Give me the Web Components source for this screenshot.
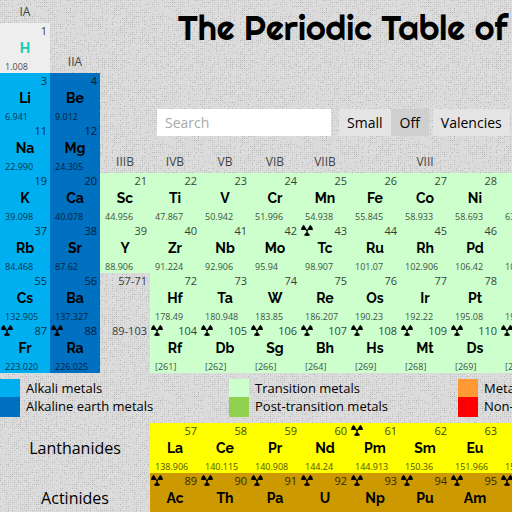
<!DOCTYPE html>
<html lang="en">
<head>
<meta charset="utf-8">
<title>The Periodic Table of Elements</title>
<style>
  html { overflow: hidden; }
  body { margin: 0; overflow: hidden; background-color: #dcdcdc; color: #000; font: 13px/18px "Open Sans", "Noto Sans", sans-serif; }
</style>
</head>
<body>
<periodic-app></periodic-app>

<template id="cell-template">
  <style>
    :host { display: grid; grid-template-rows: 16px 18px 16px; height: 50px; box-sizing: border-box; padding: 0 3px 0 1px; overflow: hidden; background: var(--cell, transparent); }
    :host([state="gas"]) { --symbol: #11ccaa; }
    .top { display: flex; align-items: center; justify-content: space-between; }
    .number { margin-left: auto; font-size: 11px; line-height: 16px; opacity: .75; }
    .symbol { font: 700 14px/18px "Raleway", "Lato", "Open Sans", sans-serif; padding-left: 2px; text-align: center; color: var(--symbol, #000); }
    .weight { font-size: 9px; line-height: 20px; padding-left: 4px; opacity: .7; white-space: nowrap; }
    svg { display: none; width: 12px; height: 12px; margin-top: -2px; }
    :host([radioactive]) svg { display: block; }
  </style>
  <div class="top">
    <svg viewBox="0 0 12 12" role="img" aria-label="Radioactive"><path d="M2.8.8 5.4 5A2 2 0 0 0 4.6 6H0Q.2 2.6 2.8.8ZM9.2.8Q11.8 2.6 12 6H7.4A2 2 0 0 0 6.6 5ZM6 7.4 9.2 11.2Q6 12.8 2.8 11.2ZM6 5.2a1.2 1.2 0 1 1 0 2.4 1.2 1.2 0 0 1 0-2.4Z"/></svg>
    <span class="number"><slot name="number"></slot></span>
  </div>
  <div class="symbol"><slot></slot></div>
  <div class="weight"><slot name="weight"></slot></div>
</template>

<template id="header-template">
  <style>
    :host { display: flex; flex-direction: column; height: 173px; box-sizing: border-box; }
    h1 { margin: 0; padding-left: 78px; height: 109px; box-sizing: border-box; font: 400 34px/56px "Righteous", "Lato", "Open Sans", sans-serif; white-space: nowrap; }
    form { display: flex; align-items: center; margin: 0; padding-left: 57px; gap: 8px; }
    input, button { box-sizing: border-box; height: 27px; border: 0; border-radius: 0; font: 14px/20px "Open Sans", "Noto Sans", sans-serif; color: #000; }
    input { width: 174px; padding: 0 8px; background: #fff; }
    input::placeholder { color: #a9a9a9; opacity: 1; }
    button { background: #e4e4e4; padding: 0 8px; white-space: nowrap; }
    button[aria-pressed="true"] { background: #cfcfcf; padding: 0 9px; }
    .group { display: flex; margin-right: -4px; }
  </style>
  <h1>The Periodic Table of</h1>
  <form>
    <input type="search" placeholder="Search" aria-label="Search">
    <div class="group"><button type="button">Small</button><button type="button" aria-pressed="true">Off</button></div>
    <button type="button">Valencies</button>
  </form>
  <slot></slot>
</template>

<template id="legend-template">
  <style>
    :host { display: block; padding: 6px 0; }
    ul { display: grid; grid-template-columns: repeat(3, 229px); grid-auto-rows: 18px; margin: 0; padding: 0 0 2px; list-style: none; }
    li { display: flex; gap: 6px; font-size: 13px; line-height: 19px; white-space: nowrap; }
    i { width: 20px; height: 20px; background: var(--swatch); }
  </style>
  <ul></ul>
</template>

<template id="app-template">
  <style>
    :host { display: block; overflow: hidden; }
    table { border-collapse: collapse; table-layout: fixed; width: 550px; }
    td, th { padding: 0; font-weight: 400; vertical-align: bottom; }
    .group { font-size: 12px; line-height: 23px; height: 23px; color: #444; text-align: center; }
    .groups { display: grid; grid-template-columns: repeat(8, 50px); margin-top: auto; }
    .series { font-size: 16px; line-height: 50px; text-align: center; vertical-align: middle; }
  </style>
  <table class="main"></table>
  <table-legend></table-legend>
  <table class="inner"></table>
</template>

<script>
  const stamp = (host, id) => {
    const root = host.attachShadow({ mode: "open" });
    root.append(document.getElementById(id).content.cloneNode(true));
    return root;
  };

  const colors = { h: "#eeeeee", a: "#00aff0", e: "#0070c0", t: "#ccffcc", l: "#ffff00", c: "#cc9900", r: "transparent" };

  const cell = ([kind, number, symbol = "", weight = "", radioactive]) =>
    `<td><element-cell style="--cell:${colors[kind]}"${radioactive ? " radioactive" : ""}${kind === "h" ? ' state="gas"' : ""}>` +
    `<span slot="number">${number}</span>${symbol}<span slot="weight">${weight}</span></element-cell></td>`;

  const series = (kind, start, list, radioactive) =>
    list.split(" ").map((entry, i) => {
      const [symbol, weight] = entry.split(":");
      return [kind, start + i, symbol, weight, radioactive || symbol === "Tc" || symbol === "Pm"];
    });

  const mainRows = [
    [["a", 19, "K", "39.098"], ["e", 20, "Ca", "40.078"],
      ...series("t", 21, "Sc:44.956 Ti:47.867 V:50.942 Cr:51.996 Mn:54.938 Fe:55.845 Co:58.933 Ni:58.693 Cu:63.546")],
    [["a", 37, "Rb", "84.468"], ["e", 38, "Sr", "87.62"],
      ...series("t", 39, "Y:88.906 Zr:91.224 Nb:92.906 Mo:95.94 Tc:98.907 Ru:101.07 Rh:102.906 Pd:106.42 Ag:107.868")],
    [["a", 55, "Cs", "132.905"], ["e", 56, "Ba", "137.327"], ["r", "57-71"],
      ...series("t", 72, "Hf:178.49 Ta:180.948 W:183.85 Re:186.207 Os:190.23 Ir:192.22 Pt:195.08 Au:196.967")],
    [["a", 87, "Fr", "223.020", true], ["e", 88, "Ra", "226.025", true], ["r", "89-103"],
      ...series("t", 104, "Rf:[261] Db:[262] Sg:[266] Bh:[264] Hs:[269] Mt:[268] Ds:[269] Rg:[272]", true)]
  ];

  class ElementCell extends HTMLElement {
    constructor() { super(); stamp(this, "cell-template"); }
  }

  class TableHeader extends HTMLElement {
    constructor() { super(); stamp(this, "header-template"); }
  }

  class TableLegend extends HTMLElement {
    constructor() {
      super();
      const items = [
        ["#00aff0", "Alkali metals"], ["#ccffcc", "Transition metals"], ["#ff9933", "Metalloids"],
        ["#0070c0", "Alkaline earth metals"], ["#92d050", "Post-transition metals"], ["#ff0000", "Non-metals"]
      ];
      stamp(this, "legend-template").querySelector("ul").innerHTML =
        items.map(([color, label]) => `<li><i style="--swatch:${color}"></i><span>${label}</span></li>`).join("");
    }
  }

  class PeriodicApp extends HTMLElement {
    constructor() {
      super();
      const root = stamp(this, "app-template");
      const groups = ["IIIB", "IVB", "VB", "VIB", "VIIB", "", "VIII"];
      const label = name => `<span class="group">${name}</span>`;
      root.querySelector(".main").innerHTML =
        `<colgroup>${"<col>".repeat(11)}</colgroup>` +
        `<tr><th class="group" scope="col">IA</th><td></td>` +
        `<td colspan="9" rowspan="4"><table-header><div class="groups">${groups.map(label).join("")}</div></table-header></td></tr>` +
        `<tr>${cell(["h", 1, "H", "1.008"])}<th class="group" scope="col">IIA</th></tr>` +
        `<tr>${cell(["a", 3, "Li", "6.941"])}${cell(["e", 4, "Be", "9.012"])}</tr>` +
        `<tr>${cell(["a", 11, "Na", "22.990"])}${cell(["e", 12, "Mg", "24.305"])}</tr>` +
        mainRows.map(row => `<tr>${row.map(cell).join("")}</tr>`).join("");
      const inner = (name, cells) => `<tr><th class="series" scope="row" colspan="3">${name}</th>${cells.map(cell).join("")}</tr>`;
      root.querySelector(".inner").innerHTML =
        `<colgroup>${"<col>".repeat(11)}</colgroup>` +
        inner("Lanthanides", series("l", 57, "La:138.906 Ce:140.115 Pr:140.908 Nd:144.24 Pm:144.913 Sm:150.36 Eu:151.966 Gd:157.25")) +
        inner("Actinides", series("c", 89, "Ac:227.028 Th:232.038 Pa:231.036 U:238.029 Np:237.048 Pu:244.064 Am:243.061 Cm:247.070", true));
    }
  }

  customElements.define("element-cell", ElementCell);
  customElements.define("table-header", TableHeader);
  customElements.define("table-legend", TableLegend);
  customElements.define("periodic-app", PeriodicApp);

  /* Paper grain: dots on a 2px pitch in several strengths of grey. */
  const size = 128, shades = ["#b4b4b4", "#c0c0c0", "#cbcbcb", "#d4d4d4"], paths = shades.map(() => "");
  let seed = 7;
  const random = () => (seed = (seed * 16807) % 2147483647) / 2147483647;
  for (let y = 0; y < size; y += 2)
    for (let x = 0; x < size; x += 2) {
      const pick = Math.floor(random() * 6);
      if (pick < 4) paths[pick] += `M${x} ${y}h1v1h-1z`;
    }
  const grain = `<svg xmlns="http://www.w3.org/2000/svg" width="${size}" height="${size}" shape-rendering="crispEdges">` +
    paths.map((d, i) => `<path fill="${shades[i]}" d="${d}"/>`).join("") + "</svg>";
  document.body.style.backgroundImage = `url("data:image/svg+xml,${encodeURIComponent(grain)}")`;
</script>
</body>
</html>
